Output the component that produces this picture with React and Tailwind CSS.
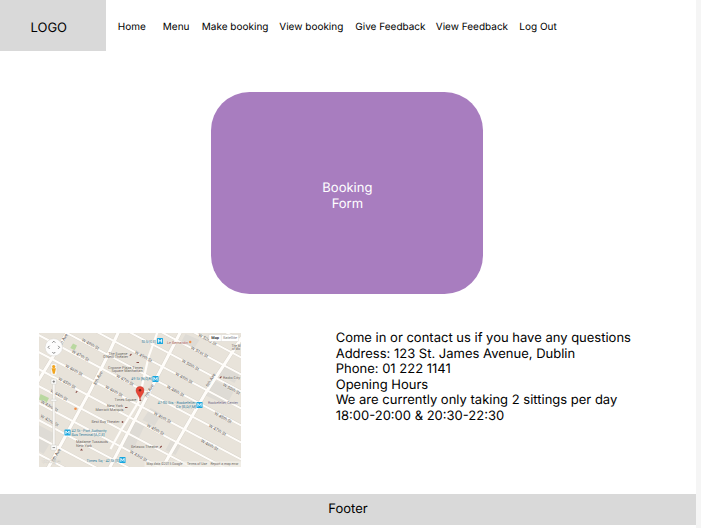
const NAV = [
  ["Home", "w-[45px]"],
  ["Menu", "w-[39px]"],
  ["Make booking", "w-[77.5px]"],
  ["View booking", "w-[76px]"],
  ["Give Feedback", "w-[80.5px]"],
  ["View Feedback", "w-[83.5px]"],
  ["Log Out", "w-[60px]"],
];

const CONTACT = [
  "Come in or contact us if you have any questions",
  "Address: 123 St. James Avenue, Dublin",
  "Phone: 01 222 1141",
  "Opening Hours",
  "We are currently only taking 2 sittings per day",
  "18:00-20:00 & 20:30-22:30",
];

// Height at which each cross street meets the map's left edge
const STREETS = [233, 250, 267, 284, 301, 318, 335, 352, 369, 386, 403, 420, 437, 454];

const AVENUES = [
  "M68 332L57 351L38 382",
  "M119 332L108 356L91 390L48 469",
  "M181 332L168 357L110 468",
  "M246 332L206 393L162 469",
];

const STREET_LABELS = [
  [91, 344, "W 49th St"], [81, 355.5, "W 47th St"], [74.5, 370, "W 46th St"],
  [67.5, 383, "W 45th St"], [59.5, 395, "W 44th St"], [125.5, 380, "W 47th St"],
  [114.5, 391, "W 46th St"], [144, 356.5, "W 49th St"], [208, 339.5, "W 52nd St"],
  [200, 352, "W 51st St"], [191, 365, "W 50th St"], [184.5, 378, "W 49th St"],
  [176, 391, "W 48th St"], [50, 406, "W 43rd St"], [50, 420.5, "W 42nd St"],
  [163, 417.5, "W 46th St"], [156, 429.5, "W 45th St"], [223.5, 417.5, "W 48th St"],
  [218, 430, "W 47th St"], [210, 445, "W 46th St"], [232, 389, "W 50th St"],
  [139, 456, "W 43rd St"],
];

const PLACES = [
  [118.5, 354.6, 19, "The Eugene", "#5f5955"],
  [116, 358, 25, "O'Neill Theater", "#5f5955"],
  [126, 369, 35, "Crowne Plaza Times", "#5f5955"],
  [127.5, 372.2, 31, "Square Manhattan", "#5f5955"],
  [126, 401.3, 22, "Times Square", "#5f5955"],
  [115.5, 407.2, 16, "New York", "#5f5955"],
  [110, 411, 28, "Marriott Marquis", "#5f5955"],
  [106, 423.4, 28, "Best Buy Theater", "#5f5955"],
  [92.5, 443, 32, "Madame Tussauds", "#5f5955"],
  [84.5, 446.8, 16, "New York", "#5f5955"],
  [145, 448.3, 27, "Belasco Theatre", "#5f5955"],
  [178, 343.5, 21, "Le Bernardin", "#a8625c"],
  [232, 379, 17, "Radio City", "#5f5955"],
  [236.5, 346.8, 9, "The M", "#5f5955"],
  [236.5, 350.4, 8, "of Mo", "#5f5955"],
  [149, 342.5, 14, "50 St [C E]", "#20708f"],
  [142, 380.3, 21, "49 St [N,Q,R]", "#20708f"],
  [177, 404.3, 38, "47-50 Sts - Rockefeller", "#20708f"],
  [186.5, 408.2, 20, "Ctr [B,D,F,M]", "#20708f"],
  [223.5, 404.3, 30, "Rockefeller Center", "#635a7c"],
  [89.5, 432.3, 35, "42 St - Port Authority", "#20708f"],
  [88.5, 436.3, 33, "Bus Terminal [A,C,E]", "#20708f"],
  [103.5, 461.5, 33, "Times Sq - 42 St [S]", "#20708f"],
];

const STATIONS = [[160.5, 341], [156, 379], [200, 405], [68, 432.5], [123, 460]];

function CityMap() {
  return (
    <svg className="block h-[134px] w-[202px]" viewBox="39.5 333 202 134" fontFamily="Roboto, sans-serif">
      <rect x="39" y="333" width="203" height="134" fill="#e8e3da" />
      <g fill="#dedbd5">
        <path d="M39 425l17 9-12 20-5-3z" />
        <path d="M213 379l22 11-8 15-22-10z" />
        <path d="M151 408l11 6-7 12-12-6z" />
        <path d="M224 366l16 8-5 9-16-8z" />
        <path d="M134 421l11 5-13 27-11-6z" />
        <path d="M186 334l14 6-6 9-13-6z" />
        <path d="M172 439l10 5-6 11-10-5z" />
      </g>
      <g stroke="#d6d1c8" fill="none">
        {STREETS.map((y) => <path key={y} d={`M36 ${y - 1.6}L246 ${y + 109.7}`} strokeWidth="2.7" />)}
        {AVENUES.map((d) => <path key={d} d={d} strokeWidth="4" />)}
      </g>
      <g stroke="#fffdfa" fill="none">
        {STREETS.map((y) => <path key={y} d={`M36 ${y - 1.6}L246 ${y + 109.7}`} strokeWidth="2" />)}
        {AVENUES.map((d) => <path key={d} d={d} strokeWidth="3.2" />)}
        <path d="M158 332L149 357L139 402L121 431L111 449" strokeWidth="2.2" />
      </g>
      <path d="M73.5 343.5l4 1.9-2.3 4.8-4.4-2.2z" fill="#b9d8a0" />
      <path d="M41 394l8.5 4-2.7 5.2-7.3-3.6z" fill="#b9d8a0" />
      <g fontSize="4.4" fill="#66625d" textAnchor="middle" stroke="#f4f1eb" strokeWidth=".6" paintOrder="stroke">
        {STREET_LABELS.map(([x, y, label]) => (
          <text key={`${x}-${y}`} x={x} y={y + 1.5} transform={`rotate(29 ${x} ${y})`}>{label}</text>
        ))}
        <text x="98.5" y="379.5" transform="rotate(-62 98.5 378)">8th Ave</text>
        <text x="149.5" y="392.5" transform="rotate(-62 149.5 391)">7th Ave</text>
        <text x="211" y="381.5" transform="rotate(-58 211 380)">6th Ave</text>
        <text x="63" y="342" transform="rotate(-60 63 340)">9th Ave</text>
        <text x="56" y="457" transform="rotate(-61 56 455)">8th Ave</text>
      </g>
      <g fontSize="3.8" textAnchor="middle" stroke="#f1ede6" strokeWidth=".5" paintOrder="stroke">
        {PLACES.map(([x, y, width, label, color]) => (
          <text key={`${x}-${y}`} x={x} y={y} fill={color} textLength={width} lengthAdjust="spacingAndGlyphs">{label}</text>
        ))}
      </g>
      {STATIONS.map(([x, y]) => (
        <g key={`${x}-${y}`}>
          <rect x={x - 3} y={y - 3} width="6" height="6" rx=".6" fill="#19a7df" />
          <path d={`M${x - 1.6} ${y + 1.7}v-3.3l1.6 2.1 1.6-2.1v3.3`} fill="none" stroke="#fff" strokeWidth=".9" />
        </g>
      ))}
      <path d="M130.3 355.7l1.7-1.7M137 362.5h2.5M160.5 447.7l1.7-1.7M76.3 392.7l1.5-1.5M125.5 407.5h2.5M220.3 378.2l1.7-1.7" stroke="#8a4e48" strokeWidth="1.2" />
      <circle cx="123" cy="422" r=".9" fill="#8a4e48" />
      <path d="M80.5 450.5l1.5-2 1.5 2zM139.5 401l1.3-1.8 1.3 1.8z" fill="#8a4e48" />
      <circle cx="76" cy="408.7" r="1.3" fill="#f18c45" />
      <circle cx="190.7" cy="342" r="1.2" fill="#f18c45" />
      <path d="M140.5 400c-.5-4.5-4-6.2-4-9.6a4 4 0 0 1 8 0c0 3.4-3.5 5.1-4 9.6z" fill="#e84636" stroke="#b83329" strokeWidth=".4" />
      <circle cx="140.5" cy="390.3" r="1.2" fill="#762018" />
      <circle cx="54.3" cy="347.3" r="8.7" fill="#fdfdfd" stroke="#d5d2cc" strokeWidth=".5" />
      <path d="M52.8 342.7l1.5-1.5 1.5 1.5M52.8 352l1.5 1.5 1.5-1.5M50 345.8l-1.5 1.5 1.5 1.5M58.6 345.8l1.5 1.5-1.5 1.5" fill="none" stroke="#777" strokeWidth=".9" />
      <rect x="51.2" y="363.5" width="6.2" height="11.5" rx="1" fill="#f8f7f4" stroke="#d5d2cc" strokeWidth=".4" />
      <circle cx="54.2" cy="366.6" r="1.6" fill="#f2a51e" />
      <path d="M52 368.2h4.4l-.6 3-.6 2.6h-1.8l-.6-2.6z" fill="#f2a51e" />
      <rect x="53.3" y="383" width="2.2" height="63" fill="#f8f7f4" stroke="#d0cdc7" strokeWidth=".4" />
      <g fill="#fbfbfa" stroke="#cbc8c2" strokeWidth=".5">
        <rect x="51.5" y="379" width="5.6" height="5.2" rx=".6" />
        <rect x="51.5" y="445" width="5.6" height="5.2" rx=".6" />
        <rect x="51.3" y="399.2" width="6" height="2.1" rx=".5" />
      </g>
      <path d="M53 381.6h2.6m-1.3-1.3v2.6M53 447.6h2.6" stroke="#666" strokeWidth=".7" />
      <rect x="209.5" y="334.7" width="29.5" height="6.6" fill="#fff" stroke="#d9d6d0" strokeWidth=".4" />
      <path d="M221.8 334.7v6.6" stroke="#d9d6d0" strokeWidth=".5" />
      <text x="215.6" y="339.4" fontSize="3.9" fontWeight="700" fill="#333" textAnchor="middle">Map</text>
      <text x="230.5" y="339.4" fontSize="3.9" fill="#777" textAnchor="middle">Satellite</text>
      <text x="42" y="463" fontSize="6" fill="#f7f5f0" stroke="#c9c4bb" strokeWidth=".2">Google</text>
      <rect x="145" y="461.3" width="97" height="6" fill="#f3f0ea" opacity=".75" />
      <g fontSize="3.9" fill="#66625c">
        <text x="147" y="465.3" textLength="36" lengthAdjust="spacingAndGlyphs">Map data ©2015 Google</text>
        <text x="187.5" y="465.3" textLength="20" lengthAdjust="spacingAndGlyphs">Terms of Use</text>
        <text x="211" y="465.3" textLength="28" lengthAdjust="spacingAndGlyphs">Report a map error</text>
      </g>
    </svg>
  );
}

export default function App() {
  return (
    <div className="h-[528px] w-[701px] overflow-hidden bg-[#f5f5f5] font-['Inter',sans-serif] text-[13px] leading-[15.5px] text-black [text-rendering:geometricPrecision]">
      <div className="flex h-full w-[696px] flex-col bg-white">
        <header className="flex h-[50.5px] shrink-0">
          <div className="flex w-[106.3px] shrink-0 items-center bg-[#d9d9d9] pt-[6px] pl-[30.5px]">LOGO</div>
          <nav className="flex pt-[19.5px] pl-[11.5px] text-[10px]">
            {NAV.map(([label, width]) => (
              <a key={label} className={`${width} shrink-0 whitespace-nowrap`}>{label}</a>
            ))}
          </nav>
        </header>
        <section className="mt-[41.9px] ml-[211.4px] flex h-[202.1px] w-[272px] shrink-0 items-center justify-center rounded-[38.5px] bg-[#a87dbf] pt-[7px] text-center text-white">
          <p>Booking<br />Form</p>
        </section>
        <main className="mt-[38.5px] flex h-[134px] shrink-0 pl-[39.4px]">
          <CityMap />
          <div className="-mt-[1.7px] ml-[94.3px] whitespace-nowrap">
            {CONTACT.map((line) => <p key={line}>{line}</p>)}
          </div>
        </main>
        <footer className="mt-[26.7px] flex h-[31.2px] shrink-0 items-center justify-center bg-[#d9d9d9]">Footer</footer>
      </div>
    </div>
  );
}
